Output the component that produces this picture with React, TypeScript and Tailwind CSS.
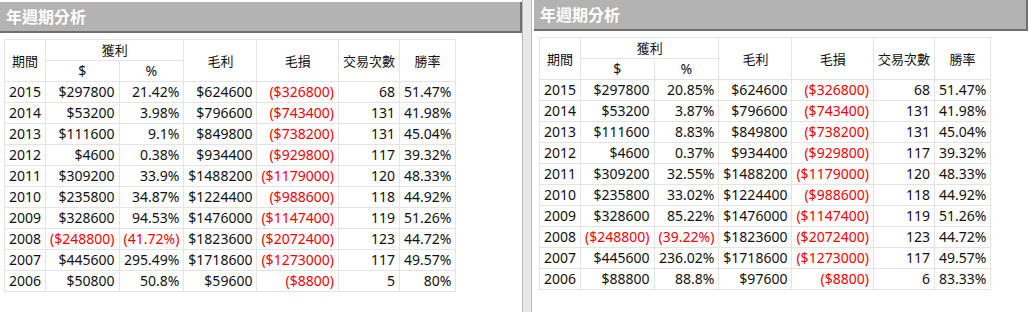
type Row = [string, string, string, string, string, string, string];

const LEFT: Row[] = [
  ["2015", "$297800", "21.42%", "$624600", "($326800)", "68", "51.47%"],
  ["2014", "$53200", "3.98%", "$796600", "($743400)", "131", "41.98%"],
  ["2013", "$111600", "9.1%", "$849800", "($738200)", "131", "45.04%"],
  ["2012", "$4600", "0.38%", "$934400", "($929800)", "117", "39.32%"],
  ["2011", "$309200", "33.9%", "$1488200", "($1179000)", "120", "48.33%"],
  ["2010", "$235800", "34.87%", "$1224400", "($988600)", "118", "44.92%"],
  ["2009", "$328600", "94.53%", "$1476000", "($1147400)", "119", "51.26%"],
  ["2008", "($248800)", "(41.72%)", "$1823600", "($2072400)", "123", "44.72%"],
  ["2007", "$445600", "295.49%", "$1718600", "($1273000)", "117", "49.57%"],
  ["2006", "$50800", "50.8%", "$59600", "($8800)", "5", "80%"],
];

const RIGHT: Row[] = [
  ["2015", "$297800", "20.85%", "$624600", "($326800)", "68", "51.47%"],
  ["2014", "$53200", "3.87%", "$796600", "($743400)", "131", "41.98%"],
  ["2013", "$111600", "8.83%", "$849800", "($738200)", "131", "45.04%"],
  ["2012", "$4600", "0.37%", "$934400", "($929800)", "117", "39.32%"],
  ["2011", "$309200", "32.55%", "$1488200", "($1179000)", "120", "48.33%"],
  ["2010", "$235800", "33.02%", "$1224400", "($988600)", "118", "44.92%"],
  ["2009", "$328600", "85.22%", "$1476000", "($1147400)", "119", "51.26%"],
  ["2008", "($248800)", "(39.22%)", "$1823600", "($2072400)", "123", "44.72%"],
  ["2007", "$445600", "236.02%", "$1718600", "($1273000)", "117", "49.57%"],
  ["2006", "$88800", "88.8%", "$97600", "($8800)", "6", "83.33%"],
];

// Windows-ish grid: thin light lines, 21px rows
const th = "border border-[#e4e4e4] px-[4px] py-0 leading-[20px] text-[13px] font-normal text-center align-middle";
const td = "border border-[#e4e4e4] px-[4px] py-0 leading-[20px] whitespace-nowrap";

function Cell({ v, first }: { v: string; first?: boolean }) {
  const neg = v.startsWith("(");
  return (
    <td className={`${td} ${first ? "text-left" : "text-right"} ${neg ? "text-[#ff0000]" : "text-[#111]"}`}>
      {v}
    </td>
  );
}

function CycleTable({ rows }: { rows: Row[] }) {
  return (
    <table className="border-collapse text-[14px] text-[#111]">
      <thead>
        <tr className="h-[21px]">
          <th rowSpan={2} className={th}>期間</th>
          <th colSpan={2} className={th}>獲利</th>
          <th rowSpan={2} className={th}>毛利</th>
          <th rowSpan={2} className={th}>毛損</th>
          <th rowSpan={2} className={th}>交易次數</th>
          <th rowSpan={2} className={th}>勝率</th>
        </tr>
        <tr className="h-[21px]">
          <th className={`${th} !text-[14px]`}>$</th>
          <th className={`${th} !text-[14px]`}>%</th>
        </tr>
      </thead>
      <tbody>
        {rows.map((r) => (
          <tr key={r[0]} className="h-[21px]">
            {r.map((v, i) => (
              <Cell key={i} v={v} first={i === 0} />
            ))}
          </tr>
        ))}
      </tbody>
    </table>
  );
}

function Header() {
  return (
    <div className="h-[31px] bg-[#b3b3b3] border-b-2 border-r-2 border-[#6f6f6f] flex items-center pl-[6px]">
      <span className="text-white text-[16px] font-bold leading-none">年週期分析</span>
    </div>
  );
}

function Splitter() {
  return <div className="w-[10px] shrink-0 h-full bg-[#e8e8e8] border-x border-[#b9b9b9]" />;
}

export default function App() {
  return (
    <div
      className="flex h-[312px] w-[1030px] bg-white overflow-hidden"
      style={{ fontFamily: '"Noto Sans", "Noto Sans CJK TC", sans-serif' }}
    >
      <div className="w-[522px] shrink-0 pt-[2px]">
        <Header />
        <div className="mt-[6px] ml-[4px]">
          <CycleTable rows={LEFT} />
        </div>
      </div>
      <Splitter />
      <div className="w-[494px] shrink-0 ml-[2px]">
        <Header />
        <div className="mt-[6px] ml-[5px]">
          <CycleTable rows={RIGHT} />
        </div>
      </div>
      <div className="ml-[2px] w-[4px] shrink-0 h-full bg-[#e8e8e8] border-l border-[#b9b9b9]" />
    </div>
  );
}
